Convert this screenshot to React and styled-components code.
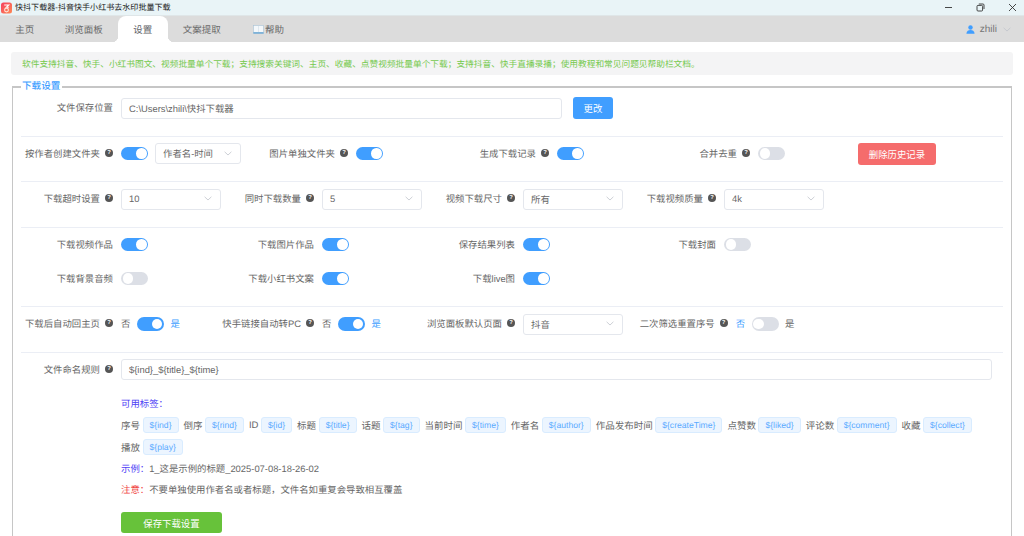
import React from 'react';
import styled, { createGlobalStyle } from 'styled-components';

const GlobalStyle = createGlobalStyle`
    html, body {
        margin: 0;
        padding: 0;
        height: 100%;
        overflow: hidden;
        background: #fff;
    }
    body {
        font-family: "Liberation Sans", "Noto Sans CJK SC", sans-serif;
        text-rendering: geometricPrecision;
    }
`

const blue = '#409eff',
    labelColor = '#666',
    lineColor = '#ebeef5',
    inputBorder = '#e4e7ed'

const tabs = [
    { name: '主页' },
    { name: '浏览面板' },
    { name: '设置', active: true },
    { name: '文案提取' },
    { name: '帮助', book: true },
]

const namingTags = [
    ['序号', '${ind}'],
    ['倒序', '${rind}'],
    ['ID', '${id}'],
    ['标题', '${title}'],
    ['话题', '${tag}'],
    ['当前时间', '${time}'],
    ['作者名', '${author}'],
    ['作品发布时间', '${createTime}'],
    ['点赞数', '${liked}'],
    ['评论数', '${comment}'],
    ['收藏', '${collect}'],
    ['播放', '${play}'],
]

function AppLogo() {
    return (
        <svg width="11" height="12" viewBox="0 0 11 12">
            <defs>
                <linearGradient id="logoFill" x1="0" y1="0" x2="1" y2="1">
                    <stop offset="0" stopColor="#f5405f" />
                    <stop offset="1" stopColor="#ff8a55" />
                </linearGradient>
            </defs>
            <rect x="0" y="0.5" width="11" height="11" rx="2.5" fill="url(#logoFill)" />
            <path d="M3.2 3h4.6L5.4 5.2h2.4" fill="none" stroke="#fff" strokeWidth="1.1" />
            <circle cx="5.5" cy="8" r="1.9" fill="none" stroke="#ffe6d8" strokeWidth="1.1" />
        </svg>
    )
}

function BookIcon() {
    return (
        <svg width="11" height="9" viewBox="0 0 11 9">
            <rect x="0.5" y="0.5" width="10" height="7" fill="#f4f8fb" stroke="#a9c4d8" strokeWidth="0.6" />
            <path d="M5.5 0.8 V7" stroke="#c8d6e0" strokeWidth="0.5" />
            <path d="M0.3 8 H10.7" stroke="#4a9ad4" strokeWidth="1.1" />
        </svg>
    )
}

function UserIcon() {
    return (
        <svg width="9" height="9" viewBox="0 0 9 9">
            <circle cx="4.5" cy="2.5" r="2.2" fill={blue} />
            <path d="M0.4 8.8 C0.6 6 2.4 5 4.5 5 C6.6 5 8.4 6 8.6 8.8 Z" fill={blue} />
        </svg>
    )
}

function Chevron() {
    return (
        <svg width="8" height="5" viewBox="0 0 8 5">
            <path d="M0.6 0.8 L4 4 L7.4 0.8" fill="none" stroke="#c0c4cc" strokeWidth="0.8" />
        </svg>
    )
}

function WindowButtons() {
    return (
        <WindowControls>
            <svg width="9" height="9" viewBox="0 0 9 9">
                <path d="M1 4.5 H8" stroke="#333" strokeWidth="0.9" />
            </svg>
            <svg width="9" height="9" viewBox="0 0 9 9">
                <rect x="1" y="2.4" width="5.6" height="5.6" rx="1" fill="none" stroke="#333" strokeWidth="0.9" />
                <path d="M2.8 1 H7 Q8 1 8 2 V6" fill="none" stroke="#333" strokeWidth="0.9" />
            </svg>
            <svg width="9" height="9" viewBox="0 0 9 9">
                <path d="M1 1 L8 8 M8 1 L1 8" stroke="#333" strokeWidth="0.9" />
            </svg>
        </WindowControls>
    )
}

function Label({ text, help }) {
    return (
        <FieldLabel>
            {text}
            {help && <Help>?</Help>}
        </FieldLabel>
    )
}

function Select({ value, width = 100 }) {
    return (
        <SelectBox $width={width}>
            {value}
            <Chevron />
        </SelectBox>
    )
}

function ToggleWithText({ on }) {
    return (
        <>
            <SwitchText $active={!on}>否</SwitchText>
            <Switch $on={on} />
            <SwitchText $active={on}>是</SwitchText>
        </>
    )
}

export default function App() {
    return (
        <>
            <GlobalStyle />
            <Page>
                <TitleBar>
                    <AppLogo />
                    <TitleText>快抖下载器-抖音快手小红书去水印批量下载</TitleText>
                    <WindowButtons />
                </TitleBar>

                <TabBar>
                    {tabs.map(tab => (
                        <Tab key={tab.name} $active={tab.active} $book={tab.book}>
                            {tab.book && <BookIcon />}
                            {tab.name}
                        </Tab>
                    ))}
                    <UserMenu>
                        <UserIcon />
                        <UserName>zhili</UserName>
                        <Chevron />
                    </UserMenu>
                </TabBar>

                <Content>
                    <Notice>软件支持抖音、快手、小红书图文、视频批量单个下载；支持搜索关键词、主页、收藏、点赞视频批量单个下载；支持抖音、快手直播录播；使用教程和常见问题见帮助栏文档。</Notice>

                    <Settings>
                        <SettingsTitle>下载设置</SettingsTitle>

                        <FirstSection>
                            <Row>
                                <Label text="文件保存位置" />
                                <TextInput $width={441}>C:\Users\zhili\快抖下载器</TextInput>
                                <ChangeButton>更改</ChangeButton>
                            </Row>
                        </FirstSection>

                        <Section>
                            <Row>
                                <Item $width={235}>
                                    <Label text="按作者创建文件夹" help />
                                    <Switch $on />
                                    <Select value="作者名-时间" width={86} />
                                </Item>
                                <Item>
                                    <Label text="图片单独文件夹" help />
                                    <Switch $on />
                                </Item>
                                <Item>
                                    <Label text="生成下载记录" help />
                                    <Switch $on />
                                </Item>
                                <Item $width={200}>
                                    <Label text="合并去重" help />
                                    <Switch />
                                </Item>
                                <DangerButton>删除历史记录</DangerButton>
                            </Row>
                        </Section>

                        <Section>
                            <Row>
                                <Item>
                                    <Label text="下载超时设置" help />
                                    <Select value="10" />
                                </Item>
                                <Item>
                                    <Label text="同时下载数量" help />
                                    <Select value="5" />
                                </Item>
                                <Item>
                                    <Label text="视频下载尺寸" help />
                                    <Select value="所有" />
                                </Item>
                                <Item>
                                    <Label text="下载视频质量" help />
                                    <Select value="4k" />
                                </Item>
                            </Row>
                        </Section>

                        <Section>
                            <Row $gap={13}>
                                <Item>
                                    <Label text="下载视频作品" />
                                    <Switch $on />
                                </Item>
                                <Item>
                                    <Label text="下载图片作品" />
                                    <Switch $on />
                                </Item>
                                <Item>
                                    <Label text="保存结果列表" />
                                    <Switch $on />
                                </Item>
                                <Item>
                                    <Label text="下载封面" />
                                    <Switch />
                                </Item>
                            </Row>
                            <Row>
                                <Item>
                                    <Label text="下载背景音频" />
                                    <Switch />
                                </Item>
                                <Item>
                                    <Label text="下载小红书文案" />
                                    <Switch $on />
                                </Item>
                                <Item>
                                    <Label text="下载live图" />
                                    <Switch $on />
                                </Item>
                            </Row>
                        </Section>

                        <Section>
                            <Row>
                                <Item>
                                    <Label text="下载后自动回主页" help />
                                    <ToggleWithText on />
                                </Item>
                                <Item>
                                    <Label text="快手链接自动转PC" help />
                                    <ToggleWithText on />
                                </Item>
                                <Item $width={212.7}>
                                    <Label text="浏览面板默认页面" help />
                                    <Select value="抖音" />
                                </Item>
                                <Item>
                                    <Label text="二次筛选重置序号" help />
                                    <ToggleWithText />
                                </Item>
                            </Row>
                        </Section>

                        <NamingSection>
                            <Row>
                                <Label text="文件命名规则" help />
                                <TextInput $width={871}>{'${ind}_${title}_${time}'}</TextInput>
                            </Row>
                            <NamingHelp>
                                <HelpLine><Accent $color="#4d3df5">可用标签：</Accent></HelpLine>
                                <TagLines>
                                    {namingTags.map(([name, code]) => (
                                        <TagPair key={code}>
                                            <span>{name}</span>
                                            <CodeTag>{code}</CodeTag>
                                        </TagPair>
                                    ))}
                                </TagLines>
                                <HelpLine><Accent $color="#4d3df5">示例：</Accent>1_这是示例的标题_2025-07-08-18-26-02</HelpLine>
                                <HelpLine><Accent $color="#f0413c">注意：</Accent>不要单独使用作者名或者标题，文件名如重复会导致相互覆盖</HelpLine>
                                <SaveButton>保存下载设置</SaveButton>
                            </NamingHelp>
                        </NamingSection>
                    </Settings>
                </Content>
            </Page>
        </>
    )
}

const Page = styled.div`
    width: 1024px;
    height: 536px;
    overflow: hidden;
    background: #fff;
    color: ${labelColor};
    font-size: 9.4px;
`

const TitleBar = styled.div`
    display: flex;
    align-items: center;
    height: 15px;
    padding-left: 1px;
    background: #e9f4f7;
    border-bottom: 1px solid #dfe6e8;
`

const TitleText = styled.span`
    margin-left: 3px;
    font-size: 8.05px;
    color: #222;
`

const WindowControls = styled.div`
    display: flex;
    gap: 23px;
    margin-left: auto;
    margin-right: 7px;
`

const TabBar = styled.div`
    display: flex;
    align-items: stretch;
    height: 26px;
    background: #dcdcdc;
`

const Tab = styled.div`
    position: relative;
    display: flex;
    align-items: center;
    gap: 1px;
    padding: 0 15.25px;
    padding-left: ${p => (p.$book ? '17px' : '15.25px')};
    font-size: 9.5px;
    color: #6a6a6a;
    ${p => p.$active && `
        background: #fff;
        color: #606266;
        border-radius: 8px 8px 0 0;
        &::before, &::after {
            content: '';
            position: absolute;
            bottom: 0;
            width: 6px;
            height: 6px;
        }
        &::before {
            left: -6px;
            background: radial-gradient(circle at 0 0, #dcdcdc 6px, #fff 6.5px);
        }
        &::after {
            right: -6px;
            background: radial-gradient(circle at 100% 0, #dcdcdc 6px, #fff 6.5px);
        }
    `}
`

const UserMenu = styled.div`
    display: flex;
    align-items: center;
    margin-left: auto;
    padding-right: 13px;
`

const UserName = styled.span`
    margin: 0 6px 0 5px;
    font-size: 10px;
    color: #757575;
`

const Content = styled.div`
    padding: 10px 11px 0;
`

const Notice = styled.div`
    display: flex;
    align-items: center;
    height: 23px;
    padding-left: 11px;
    background: #f4f4f5;
    border-radius: 3px;
    font-size: 8.7px;
    color: #74c94d;
`

const Settings = styled.fieldset`
    margin: 6px 1px 0;
    padding: 0 8px 40px;
    min-width: 0;
    border: 1px solid #c6c6c6;
    border-top-width: 2px;
`

const SettingsTitle = styled.legend`
    margin-left: 0;
    padding: 0 2px 0 1px;
    font-size: 9.6px;
    font-weight: 500;
    line-height: 11px;
    color: ${blue};
`

const Section = styled.section`
    padding: 6.5px 0 17px;
    border-bottom: 1px solid ${lineColor};
`

const FirstSection = styled(Section)`
    padding-top: 5.5px;
`

const NamingSection = styled.section`
    padding-top: 6.5px;
`

const Row = styled.div`
    display: flex;
    align-items: center;
    height: 21px;
    margin-bottom: ${p => p.$gap || 0}px;
`

const Item = styled.div`
    display: flex;
    align-items: center;
    flex: none;
    width: ${p => p.$width || 201}px;
`

const FieldLabel = styled.div`
    display: flex;
    align-items: center;
    justify-content: flex-end;
    flex: none;
    width: 100px;
    padding: 0 8px 1.5px 0;
    box-sizing: border-box;
    white-space: nowrap;
    color: ${labelColor};
`

const Help = styled.span`
    display: inline-flex;
    align-items: center;
    justify-content: center;
    width: 8px;
    height: 8px;
    margin-left: 5px;
    border-radius: 50%;
    background: #555;
    color: #fff;
    font-size: 6px;
    font-weight: bold;
    line-height: 8px;
`

const Switch = styled.span`
    position: relative;
    flex: none;
    display: inline-block;
    width: 27px;
    height: 13.5px;
    border-radius: 7px;
    background: ${p => (p.$on ? blue : '#dcdfe6')};
    &::after {
        content: '';
        position: absolute;
        top: 1.5px;
        left: ${p => (p.$on ? '15px' : '1.5px')};
        width: 10.5px;
        height: 10.5px;
        border-radius: 50%;
        background: #fff;
    }
`

const SwitchText = styled.span`
    flex: none;
    margin: 0 6.5px 1.5px 0;
    color: ${p => (p.$active ? blue : labelColor)};
    ${Switch} + & {
        margin: 0 0 1.5px 6.5px;
    }
`

const SelectBox = styled.div`
    display: flex;
    align-items: center;
    justify-content: space-between;
    flex: none;
    box-sizing: border-box;
    width: ${p => p.$width}px;
    height: 21px;
    padding: 0 8px 1px 7px;
    border: 1px solid ${inputBorder};
    border-radius: 3px;
    background: #fff;
    ${Switch} + & {
        margin-left: 7px;
    }
`

const TextInput = styled.div`
    display: flex;
    align-items: center;
    flex: none;
    box-sizing: border-box;
    width: ${p => p.$width}px;
    height: 21px;
    padding: 0 0 1px 7px;
    border: 1px solid ${inputBorder};
    border-radius: 3px;
    background: #fff;
`

const ButtonBase = styled.button`
    flex: none;
    padding: 0;
    border: none;
    border-radius: 3px;
    color: #fff;
    font-family: inherit;
    font-size: 9.4px;
`

const ChangeButton = styled(ButtonBase)`
    width: 40px;
    height: 22px;
    margin-left: 11px;
    background: ${blue};
`

const DangerButton = styled(ButtonBase)`
    width: 78px;
    height: 22px;
    background: #f56c6c;
`

const NamingHelp = styled.div`
    padding: 13px 0 0 100px;
    width: 871px;
`

const HelpLine = styled.div`
    height: 21px;
    line-height: 21px;
    color: ${labelColor};
`

const Accent = styled.span`
    color: ${p => p.$color};
`

const TagLines = styled.div`
    display: flex;
    flex-wrap: wrap;
    align-items: center;
    color: ${labelColor};
    font-size: 9.5px;
`

const TagPair = styled.div`
    display: flex;
    align-items: center;
    height: 22px;
    white-space: nowrap;
`

const CodeTag = styled.span`
    display: block;
    height: 16px;
    line-height: 15px;
    box-sizing: border-box;
    margin: 0 5px 0 2.5px;
    padding: 0 6px;
    background: #ecf5ff;
    border: 0.5px solid #d9ecff;
    border-radius: 3px;
    color: #5aaaff;
    font-size: 8.6px;
`

const SaveButton = styled(ButtonBase)`
    display: block;
    width: 101px;
    height: 21px;
    margin-top: 12px;
    background: #67c23a;
`
